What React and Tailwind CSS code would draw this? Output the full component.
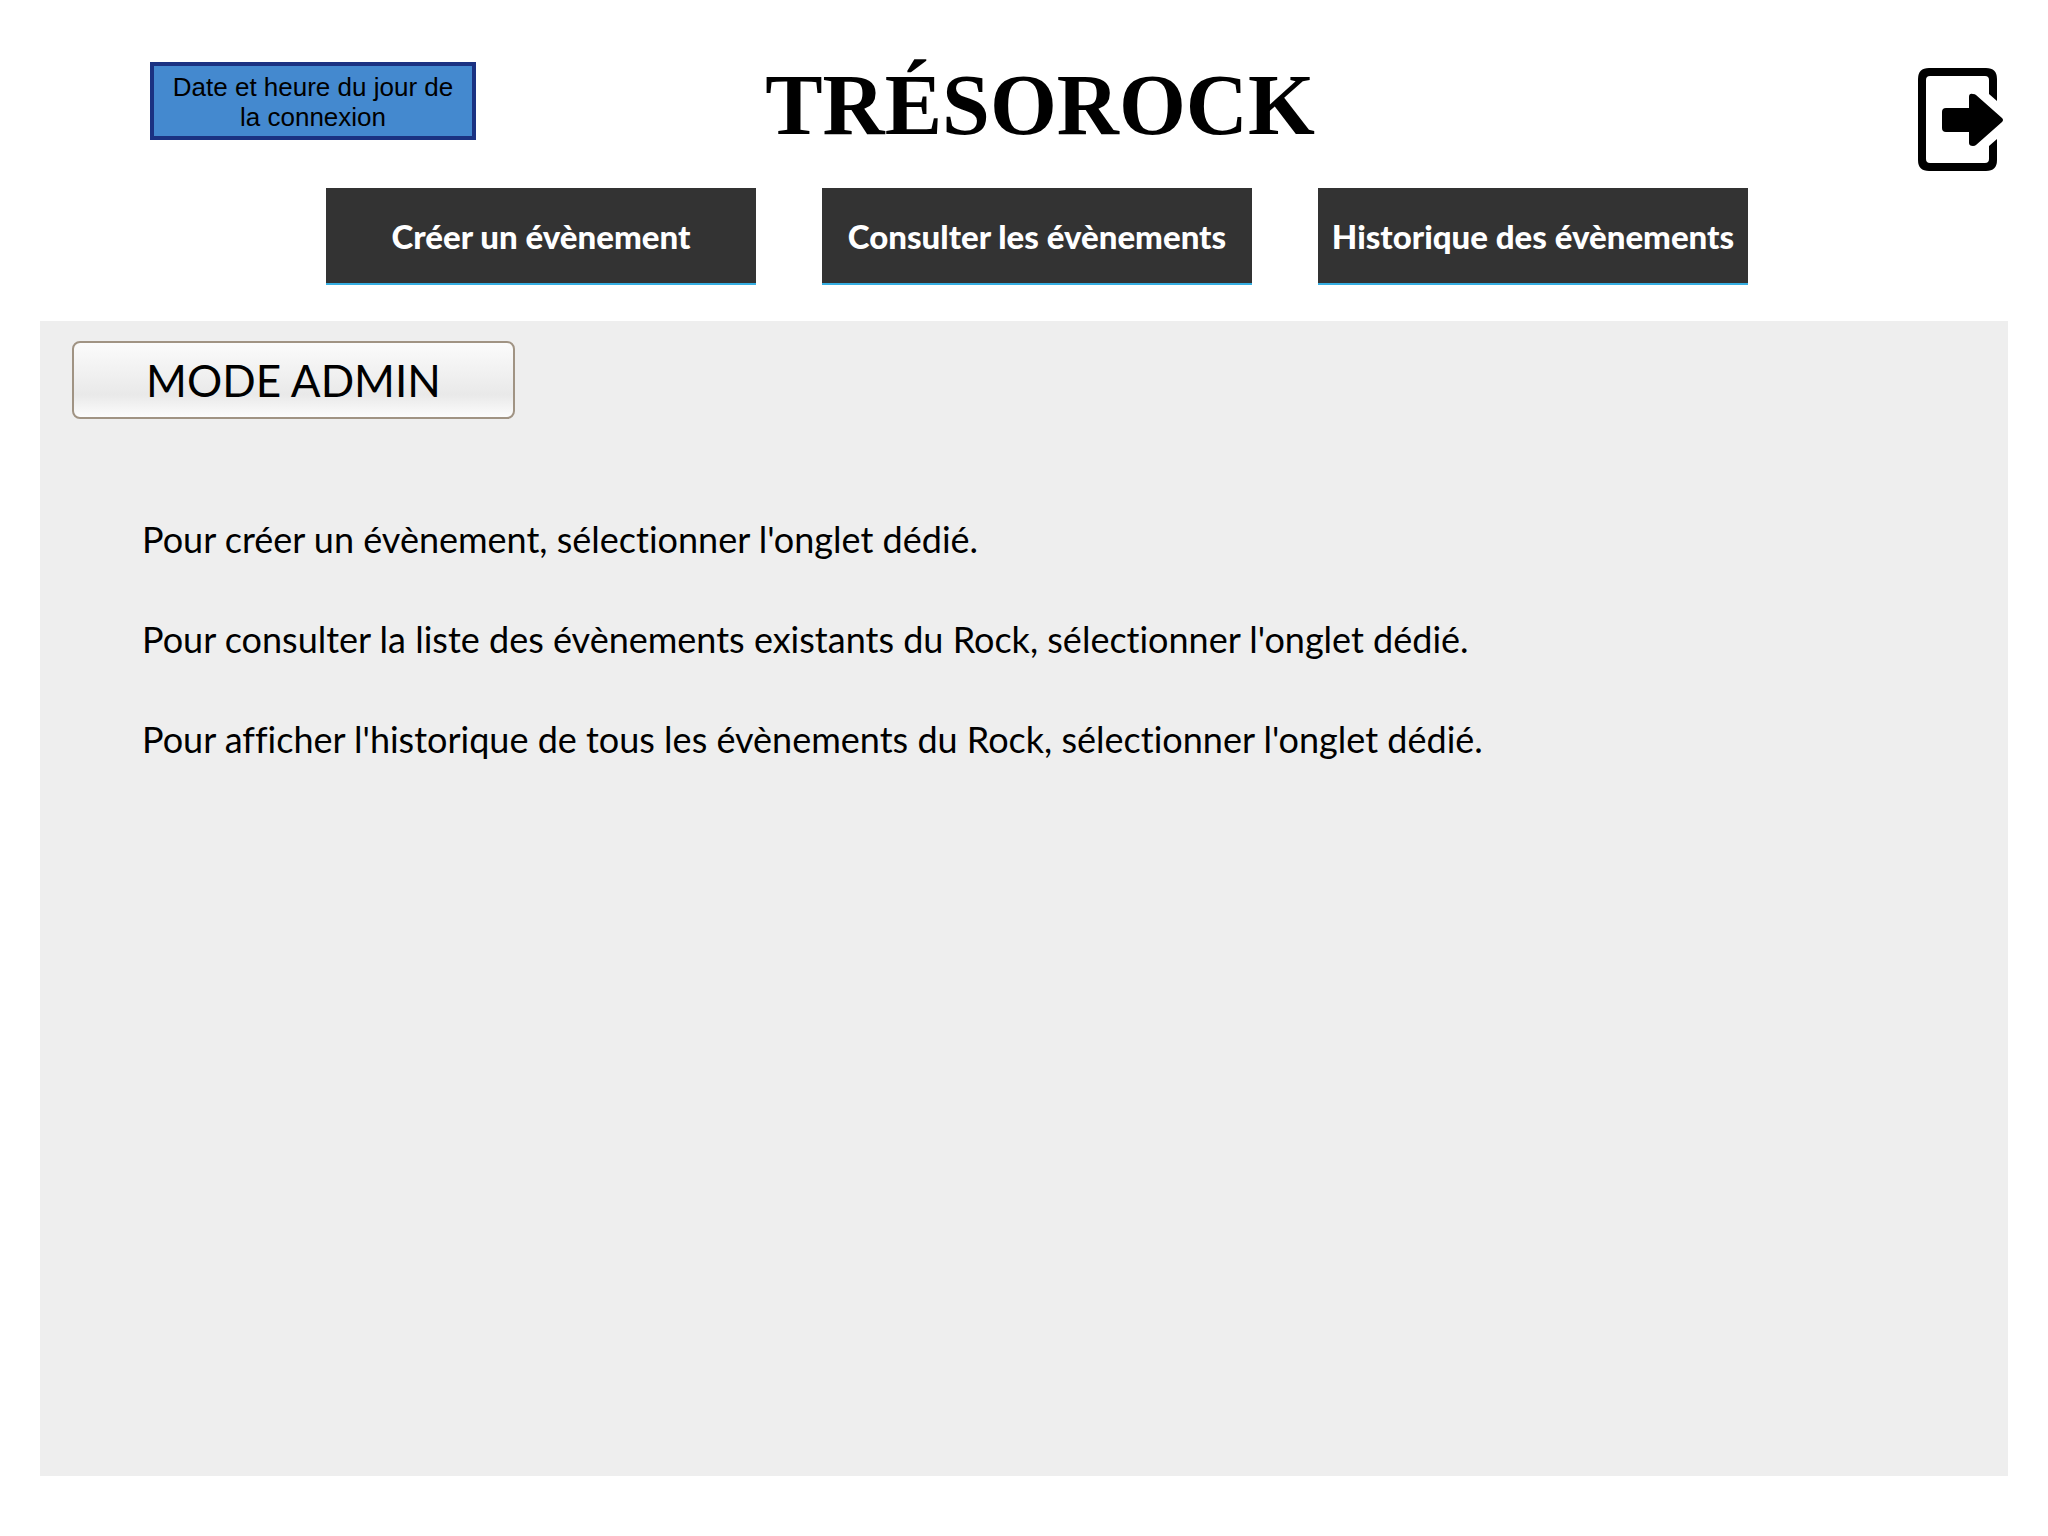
const tabs = ["Créer un évènement", "Consulter les évènements", "Historique des évènements"];

const instructions = [
  "Pour créer un évènement, sélectionner l'onglet dédié.",
  "Pour consulter la liste des évènements existants du Rock, sélectionner l'onglet dédié.",
  "Pour afficher l'historique de tous les évènements du Rock, sélectionner l'onglet dédié.",
];

function ExitIcon() {
  return (
    <svg viewBox="0 0 86 104" className="h-[104px] w-[86px]" aria-hidden="true">
      <path
        fillRule="evenodd"
        d="M11 0H68Q79 0 79 11V33L71 26V12Q71 8 67 8H12Q8 8 8 12V91Q8 95 12 95H67Q71 95 71 91V78L79 71V92Q79 103 68 103H11Q0 103 0 92V11Q0 0 11 0Z"
      />
      <path d="M28 40H51V29Q51 25 55 26Q57 26 58 27L84 50Q86 52 84 54L58 77Q57 78 55 78Q51 78 51 75V64H28Q24 64 24 60V44Q24 40 28 40Z" />
    </svg>
  );
}

export default function App() {
  return (
    <div className="flex min-h-screen flex-col bg-white px-10 pb-[60px] font-['Lato',sans-serif] text-black [font-variant-ligatures:none]">
      <header className="grid grid-cols-[1fr_auto_1fr] items-start pl-8 pt-[62px]">
        <div className="ml-[78px] w-[326px] border-4 border-[#1b3282] bg-[#4489cf] px-3 pb-1 pt-1.5 text-center font-['Liberation_Sans',sans-serif] text-[26px] leading-[30px]">
          Date et heure du jour de la connexion
        </div>
        <h1 className="font-['Liberation_Serif',serif] text-[86px] font-bold leading-[86px]">TRÉSOROCK</h1>
        <button type="button" aria-label="Se déconnecter" className="mr-1 mt-1.5 justify-self-end">
          <ExitIcon />
        </button>
      </header>

      <nav className="mt-4 flex justify-center gap-[66px] pl-[26px]">
        {tabs.map((label) => (
          <button
            key={label}
            type="button"
            className="h-[97px] w-[430px] whitespace-nowrap border-b-2 border-[#35aee2] bg-[#333333] text-[33px] font-black leading-10 text-white"
          >
            {label}
          </button>
        ))}
      </nav>

      <main className="mt-9 flex-1 bg-[#eeeeee] px-8 pt-5">
        <button
          type="button"
          className="h-[78px] w-[443px] rounded-lg border-2 border-[#a09383] bg-linear-to-b from-[#fbfbfb] via-[#e9e9e9] via-70% to-[#fcfcfc] text-[44px] leading-[48px]"
        >
          MODE ADMIN
        </button>
        <div className="mt-24 flex flex-col gap-[52px] pl-[70px] text-[36px] leading-[48px]">
          {instructions.map((line) => (
            <p key={line}>{line}</p>
          ))}
        </div>
      </main>
    </div>
  );
}
